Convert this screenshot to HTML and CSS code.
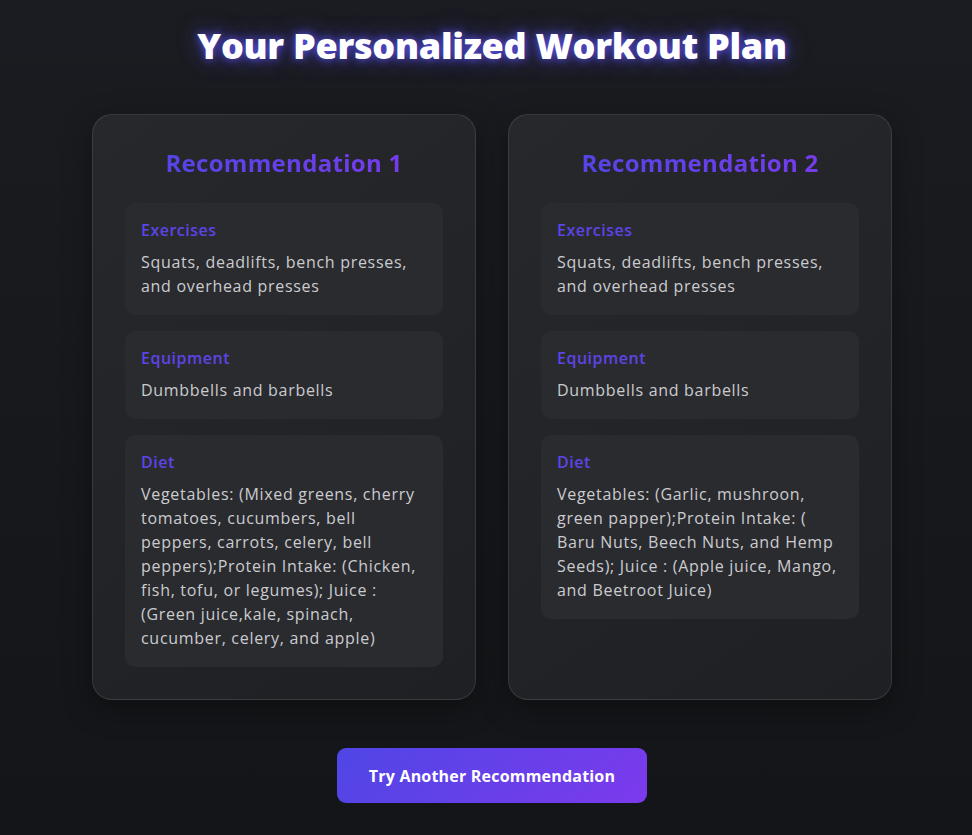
FILE: index.html
```html
<!DOCTYPE html>
<html lang="en">
<head>
<meta charset="utf-8">
<title>Your Personalized Workout Plan</title>
<link rel="stylesheet" href="styles.css">
</head>
<body>
<main class="page">
  <h1 class="title">Your Personalized Workout Plan</h1>
  <div class="cards">
    <section class="card">
      <h2 class="card-title">Recommendation 1</h2>
      <div class="block">
        <h3 class="label">Exercises</h3>
        <p class="text">Squats, deadlifts, bench presses, and overhead presses</p>
      </div>
      <div class="block">
        <h3 class="label">Equipment</h3>
        <p class="text">Dumbbells and barbells</p>
      </div>
      <div class="block">
        <h3 class="label">Diet</h3>
        <p class="text">Vegetables: (Mixed greens, cherry tomatoes, cucumbers, bell peppers, carrots, celery, bell peppers);Protein Intake: (Chicken, fish, tofu, or legumes); Juice : (Green juice,kale, spinach, cucumber, celery, and apple)</p>
      </div>
    </section>
    <section class="card">
      <h2 class="card-title">Recommendation 2</h2>
      <div class="block">
        <h3 class="label">Exercises</h3>
        <p class="text">Squats, deadlifts, bench presses, and overhead presses</p>
      </div>
      <div class="block">
        <h3 class="label">Equipment</h3>
        <p class="text">Dumbbells and barbells</p>
      </div>
      <div class="block">
        <h3 class="label">Diet</h3>
        <p class="text">Vegetables: (Garlic, mushroon, green papper);Protein Intake: ( Baru Nuts, Beech Nuts, and Hemp Seeds); Juice : (Apple juice, Mango, and Beetroot Juice)</p>
      </div>
    </section>
  </div>
  <div class="actions">
    <button class="btn" type="button">Try Another Recommendation</button>
  </div>
</main>
</body>
</html>
```
FILE: styles.css
```css
* { box-sizing: border-box; }
html, body { margin: 0; padding: 0; }
body {
  min-height: 835px;
  background: linear-gradient(180deg, #1b1c21 0%, #141518 100%);
  font-family: "Open Sans", "Noto Sans", sans-serif;
  color: #d1d1d6;
}
.page {
  display: flex;
  flex-direction: column;
  align-items: center;
  padding: 24px 0 32px 12px;
}
.title {
  margin: 0;
  font-size: 36px;
  line-height: 44px;
  font-weight: 800;
  color: #ffffff;
  text-shadow: 0 0 8px rgba(99, 88, 255, 0.9), 0 0 22px rgba(90, 80, 255, 0.6);
  letter-spacing: -0.3px;
}
.cards {
  display: flex;
  gap: 32px;
  margin-top: 46px;
  align-items: stretch;
}
.card {
  width: 384px;
  padding: 32px;
  border-radius: 20px;
  border: 1px solid rgba(255, 255, 255, 0.1);
  background: linear-gradient(145deg, #27282c 0%, #1f2023 100%);
  box-shadow: 0 8px 30px rgba(0, 0, 0, 0.35);
  display: flex;
  flex-direction: column;
  gap: 16px;
}
.card-title {
  margin: 0 0 8px;
  text-align: center;
  font-size: 24px;
  line-height: 32px;
  font-weight: 700;
  letter-spacing: 0.3px;
  background: linear-gradient(90deg, #4f46e5, #7c3aed);
  -webkit-background-clip: text;
  background-clip: text;
  color: transparent;
}
.block {
  background: #2a2b2f;
  border-radius: 10px;
  padding: 16px 16px 17px;
}
.label {
  margin: 0 0 9px;
  font-size: 16px;
  line-height: 22px;
  font-weight: 600;
  letter-spacing: 0.5px;
  color: #5b45e6;
}
.text {
  margin: 0;
  font-size: 16px;
  line-height: 24px;
  letter-spacing: 0.7px;
  color: #cbcbd0;
}
.actions {
  margin-top: 48px;
}
.btn {
  width: 310px;
  height: 55px;
  border: none;
  border-radius: 9px;
  background: linear-gradient(135deg, #4f46e5 0%, #7c3aed 100%);
  color: #ffffff;
  font-family: inherit;
  font-size: 16px;
  font-weight: 700;
  letter-spacing: 0.2px;
  cursor: pointer;
}
```
